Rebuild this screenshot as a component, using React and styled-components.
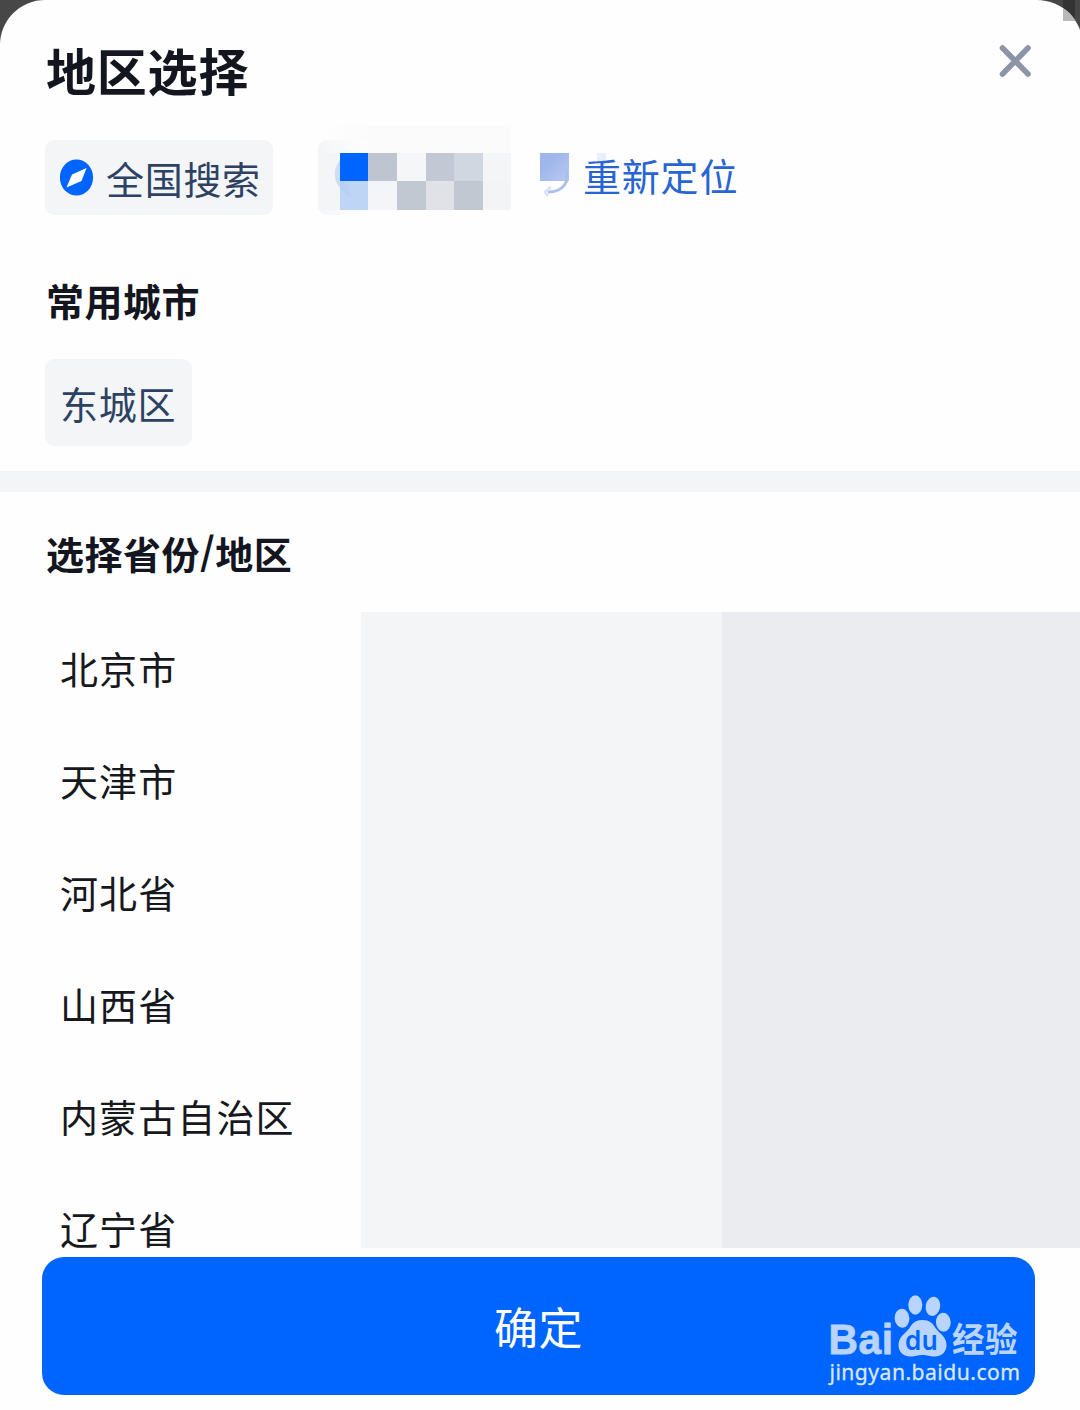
import React, { useState } from "react";
import styled, { createGlobalStyle } from "styled-components";

const GlobalStyle = createGlobalStyle`
  * {
    box-sizing: border-box;
  }
  body {
    margin: 0;
    background: #474747;
    font-family: "Noto Sans CJK SC", "Noto Sans", sans-serif;
  }
`;

const Screen = styled.div`
  position: relative;
  width: 1080px;
  height: 1410px;
  overflow: hidden;
  background: #474747;
`;

const CornerPixels = styled.svg`
  position: absolute;
  top: 0;
  right: 0;
`;

const Sheet = styled.main`
  display: flex;
  flex-direction: column;
  width: 1083px;
  height: 1410px;
  background: #fefefe;
  border-radius: 45px 46px 0 0;
`;

const Header = styled.header`
  display: flex;
  justify-content: space-between;
  height: 140px;
  padding: 34px 51px 0 46px;
`;

const Title = styled.h1`
  margin: 0;
  font-size: 50px;
  line-height: 70px;
  letter-spacing: 0.8px;
  font-weight: 700;
  color: #14161f;
`;

const CloseButton = styled.button`
  width: 34px;
  height: 34px;
  margin-top: 10px;
  padding: 0;
  border: 0;
  background: none;
`;

const LocationBar = styled.div`
  display: flex;
  height: 75px;
  padding-left: 45px;
`;

const Chip = styled.button`
  display: flex;
  align-items: center;
  gap: 12px;
  width: ${(props) => props.$width}px;
  height: ${(props) => props.$height}px;
  padding: 0 0 0 15px;
  border: 0;
  border-radius: 9px;
  background: #f3f5f7;
  color: #2d4263;
  font-family: inherit;
  font-size: 38px;
  line-height: 50px;
  letter-spacing: 0.7px;
  white-space: nowrap;
`;

const CurrentCity = styled.svg`
  width: 193px;
  height: 90px;
  margin: -15px 0 0 45px;
`;

const Relocate = styled.button`
  display: flex;
  gap: 13px;
  margin-left: 29px;
  padding: 0;
  border: 0;
  background: none;
  color: #2864d2;
  font-family: inherit;
  font-size: 38px;
  line-height: 69px;
  letter-spacing: 0.8px;
  white-space: nowrap;
`;

const RelocateIcon = styled.svg`
  width: 30px;
  height: 46px;
  margin-top: 12px;
  overflow: visible;
`;

const SectionTitle = styled.h2`
  margin: 0;
  padding-left: 46px;
  font-size: 38px;
  line-height: 54px;
  letter-spacing: 0.5px;
  font-weight: 700;
  color: #14161f;
`;

const CommonCities = styled.section`
  height: 256px;
  padding-top: 58px;

  ${Chip} {
    margin: 32px 0 0 45px;
  }
`;

const Slash = styled.span`
  position: relative;
  top: -4px;
`;

const Divider = styled.div`
  height: 21px;
  background: #f3f5f7;
`;

const Regions = styled.section`
  height: 756px;
  padding-top: 34px;
`;

const Columns = styled.div`
  display: grid;
  grid-template-columns: 361px 361px 1fr;
  height: 636px;
  margin-top: 32px;
`;

const Column = styled.ul`
  margin: 0;
  padding: 0;
  list-style: none;
  overflow: hidden;
  background: ${(props) => props.$bg};
`;

const Province = styled.li`
  height: 112px;
  padding-left: 60px;
  font-size: 38px;
  line-height: 112px;
  letter-spacing: 1.1px;
  color: #17181d;
`;

const Footer = styled.footer`
  padding: 9px 48px 0 42px;
`;

const ConfirmButton = styled.button`
  position: relative;
  width: 100%;
  height: 138px;
  padding: 0;
  border: 0;
  border-radius: 22px;
  background: #0065ff;
  color: #fff;
  font-family: inherit;
  font-size: 44px;
  line-height: 137px;
  letter-spacing: 0.5px;
`;

const Watermark = styled.svg`
  position: absolute;
  right: 8px;
  bottom: 5px;
`;

const provinces = ["北京市", "天津市", "河北省", "山西省", "内蒙古自治区", "辽宁省"];

const cityPixels = [
  ["#0065ff", "#bfc5d0", "#f5f6f8", "#c3c9d4", "#d1d7e1", "#f3f5f7"],
  ["#bfd5f5", "#f3f5f8", "#c2c8d2", "#e0e2e8", "#c2c8d2", "#f2f4f6"],
];

const columnEdges = [22, 50, 79, 108, 136, 165, 193];

const CompassIcon = () => (
  <svg width="34" height="37" viewBox="0 0 34 37">
    <ellipse cx="16.5" cy="18.5" rx="16.6" ry="18" fill="#0065ff" />
    <path d="M26.5 9 21.500 22 6.500 28.500 12 15.500Z" fill="#fff" />
  </svg>
);

const BaiduLogo = () => (
  <Watermark width="200" height="98" viewBox="0 0 200 98">
    <g fill="#b9d4ff">
      <text
        x="1.5"
        y="61.5"
        fontFamily="Liberation Sans"
        fontWeight="700"
        fontSize="43"
        stroke="#b9d4ff"
        strokeWidth="0.8"
        textLength="65"
        lengthAdjust="spacingAndGlyphs"
      >
        Bai
      </text>
      <ellipse cx="75" cy="26.3" rx="7.4" ry="9.5" transform="rotate(-4 75 26)" />
      <ellipse cx="88.3" cy="13" rx="7" ry="9.7" />
      <ellipse cx="106" cy="14.3" rx="7.2" ry="9.7" transform="rotate(10 106 14)" />
      <ellipse cx="116.3" cy="30.3" rx="7.4" ry="9.5" transform="rotate(-4 116 30)" />
      <path d="M95.500 28c-7 0-10 3-13 8-3 5-11 8-11 17 0 7 5 11.500 12 11.500 5 0 7-1.500 12-1.500s7 1.500 12 1.500c7 0 12-4.500 12-11.500 0-9-8-12-11-17-3-5-6-8-13-8Z" />
      <text
        x="125"
        y="59.5"
        fontFamily="Noto Sans CJK SC"
        fontWeight="700"
        fontSize="34"
        textLength="66"
        lengthAdjust="spacingAndGlyphs"
      >
        经验
      </text>
    </g>
    <text
      x="78"
      y="57.5"
      fill="#0065ff"
      fontFamily="Inter"
      fontWeight="600"
      fontSize="27"
      textLength="33"
      lengthAdjust="spacingAndGlyphs"
    >
      du
    </text>
    <text
      x="2.5"
      y="88"
      fill="#dbe8ff"
      stroke="#dbe8ff"
      strokeWidth="0.3"
      fontFamily="Noto Sans"
      fontSize="22.5"
      textLength="191"
      lengthAdjust="spacingAndGlyphs"
    >
      jingyan.baidu.com
    </text>
  </Watermark>
);

const App = () => {
  const [city, setCity] = useState("东城区");

  return (
    <>
      <GlobalStyle />
      <Screen>
        <Sheet>
          <Header>
            <Title>地区选择</Title>
            <CloseButton aria-label="关闭">
              <svg width="34" height="34" viewBox="0 0 34 34">
                <path
                  d="M4.500 4 30 30M30 4 4.500 30"
                  stroke="#8b95a7"
                  strokeWidth="5.6"
                  strokeLinecap="round"
                />
              </svg>
            </CloseButton>
          </Header>
          <LocationBar>
            <Chip $width={228} $height={75}>
              <CompassIcon />
              全国搜索
            </Chip>
            {/* current city is masked with a coarse pixel grid */}
            <CurrentCity viewBox="0 0 193 90">
              <defs>
                <linearGradient id="haze">
                  <stop offset="0" stopColor="#fbfbfc" stopOpacity="0" />
                  <stop offset="0.3" stopColor="#fbfbfc" />
                </linearGradient>
                <linearGradient id="fade">
                  <stop offset="0" stopColor="#f3f5f7" />
                  <stop offset="0.4" stopColor="#f8f9fa" />
                  <stop offset="1" stopColor="#fdfdfd" />
                </linearGradient>
              </defs>
              <path d="M0 0h193v28H0z" fill="url(#haze)" />
              <path d="M9 15H50V90H9a9 9 0 0 1-9-9V24a9 9 0 0 1 9-9Z" fill="url(#fade)" />
              <path d="M0 28h22v57H0z" fill="#f3f5f7" />
              <path d="M22 35c-7 8-7 20 0 28Z" fill="#cbdef7" />
              {cityPixels.map((row, y) =>
                row.map((color, x) => (
                  <rect
                    key={`${x}-${y}`}
                    x={columnEdges[x]}
                    y={y === 0 ? 28 : 56}
                    width={columnEdges[x + 1] - columnEdges[x]}
                    height={y === 0 ? 28 : 29}
                    fill={color}
                  />
                ))
              )}
              <path d="M22 56v8l11 9-4-17Z" fill="#afcbf4" opacity="0.5" />
            </CurrentCity>
            <Relocate>
              <RelocateIcon viewBox="0 0 30 46">
                <defs>
                  <linearGradient id="patch" x1="0" y1="0" x2="1" y2="1">
                    <stop offset="0.3" stopColor="#9fb6eb" />
                    <stop offset="1" stopColor="#b9c9f1" />
                  </linearGradient>
                </defs>
                <path d="M0 1h29v28H0z" fill="url(#patch)" />
                <path d="M26 17c4 12-2 23-18 23" fill="none" stroke="#a9bff0" strokeWidth="3" />
                <path d="M11 35 5 40l3 4" fill="none" stroke="#d6e2fa" strokeWidth="2.5" />
                <path d="M57 1h9v12h-9z" fill="#e9effa" />
              </RelocateIcon>
              重新定位
            </Relocate>
          </LocationBar>
          <CommonCities>
            <SectionTitle>常用城市</SectionTitle>
            <Chip $width={147} $height={87}>
              {city}
            </Chip>
          </CommonCities>
          <Divider />
          <Regions>
            <SectionTitle>
              选择省份<Slash>/</Slash>地区
            </SectionTitle>
            <Columns>
              <Column>
                {provinces.map((name) => (
                  <Province key={name} onClick={() => setCity(name)}>
                    {name}
                  </Province>
                ))}
              </Column>
              <Column $bg="#f4f5f7" />
              <Column $bg="#ebecf0" />
            </Columns>
          </Regions>
          <Footer>
            <ConfirmButton>
              确定
              <BaiduLogo />
            </ConfirmButton>
          </Footer>
        </Sheet>
        <CornerPixels width="17" height="21">
          <path d="M0 0h12v20Q7 12 0 8Z" fill="#343434" />
          <path d="M0 8Q7 12 12 20v1H0Z" fill="#b9b9b9" />
        </CornerPixels>
      </Screen>
    </>
  );
};

export default App;
